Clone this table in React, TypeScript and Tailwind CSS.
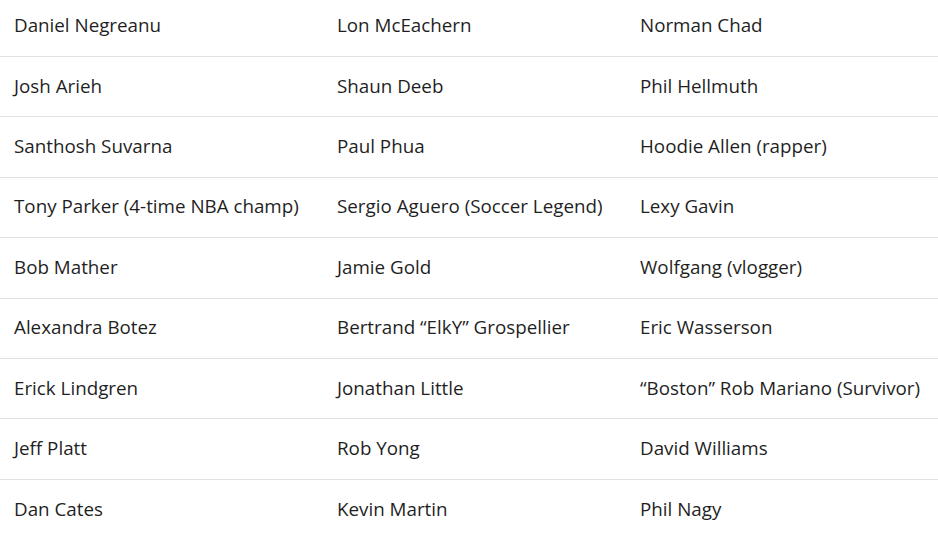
const rows: [string, string, string][] = [
  ['Daniel Negreanu', 'Lon McEachern', 'Norman Chad'],
  ['Josh Arieh', 'Shaun Deeb', 'Phil Hellmuth'],
  ['Santhosh Suvarna', 'Paul Phua', 'Hoodie Allen (rapper)'],
  ['Tony Parker (4-time NBA champ)', 'Sergio Aguero (Soccer Legend)', 'Lexy Gavin'],
  ['Bob Mather', 'Jamie Gold', 'Wolfgang (vlogger)'],
  ['Alexandra Botez', 'Bertrand \u201cElkY\u201d Grospellier', 'Eric Wasserson'],
  ['Erick Lindgren', 'Jonathan Little', '\u201cBoston\u201d Rob Mariano (Survivor)'],
  ['Jeff Platt', 'Rob Yong', 'David Williams'],
  ['Dan Cates', 'Kevin Martin', 'Phil Nagy'],
];

export default function App() {
  return (
    <div className="w-[938px] h-[539px] overflow-hidden bg-white text-[#1f1f1f] font-['Open_Sans',sans-serif] text-[18.8px]">
      <div className="-mt-[3.4px]">
        {rows.map((r, i) => (
          <div
            key={i}
            className={`grid grid-cols-[323px_303px_1fr] items-center h-[60.4px] pb-[2px] ${i < rows.length - 1 ? 'border-b border-[#e2e2e2]' : ''}`}
          >
            {r.map((name) => (
              <div key={name} className="pl-[14px] whitespace-nowrap">
                {name}
              </div>
            ))}
          </div>
        ))}
      </div>
    </div>
  );
}
